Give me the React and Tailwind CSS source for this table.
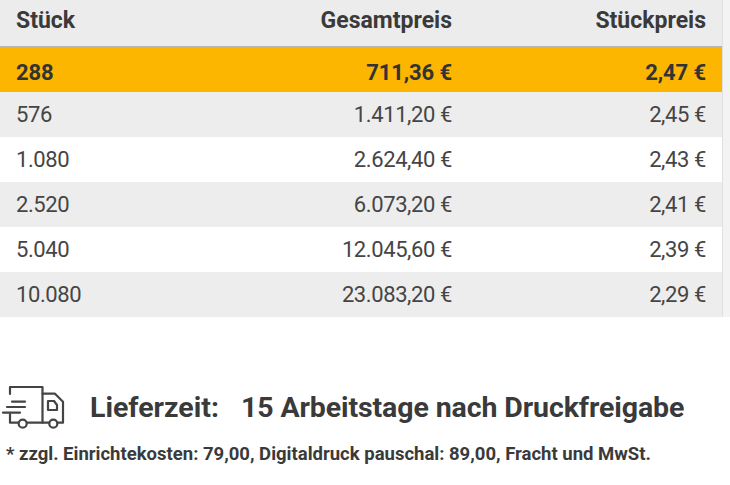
import React from "react";

const rows = [
  ["576", "1.411,20 €", "2,45 €"],
  ["1.080", "2.624,40 €", "2,43 €"],
  ["2.520", "6.073,20 €", "2,41 €"],
  ["5.040", "12.045,60 €", "2,39 €"],
  ["10.080", "23.083,20 €", "2,29 €"],
];

function Truck() {
  return (
    <svg width="70" height="52" viewBox="0 0 70 52" fill="none" stroke="#444" strokeWidth="2.2" strokeLinecap="round" strokeLinejoin="round">
      <path d="M10 13 V6 H42.5 V41.7" />
      <path d="M42.5 12.7 H55 L63 20.7 V41.7 H58" />
      <path d="M27 41.7 H49" />
      <path d="M10 33 V41.7 H18" />
      <path d="M48 20 H54 L57 24 V29 H48 Z" />
      <path d="M12 20.7 H25" />
      <path d="M7 26 H25" />
      <path d="M3 31.7 H20" />
      <circle cx="22.7" cy="42.7" r="4" />
      <circle cx="53.3" cy="42.7" r="4" />
    </svg>
  );
}

export default function App() {
  return (
    <div className="w-[730px] h-[485px] bg-white text-[#3d3d3d] font-['Roboto',sans-serif] overflow-hidden">
      <div className="flex">
        <div className="w-[722px]">
          <div className="grid grid-cols-[214px_254px_254px] h-[46px] bg-[#ececec] items-start pt-[4px] text-[23px] font-bold text-[#3a3a3a]">
            <div className="pl-4">Stück</div>
            <div className="pr-4 text-right">Gesamtpreis</div>
            <div className="pr-4 text-right">Stückpreis</div>
          </div>
          <div className="h-[2px] bg-[#b5b5b5]" />
          <div className="grid grid-cols-[214px_254px_254px] h-[44px] bg-[#fdb600] items-center pt-[4px] text-[22px] font-bold tracking-[-0.1px] text-[#333]">
            <div className="pl-4">288</div>
            <div className="pr-4 text-right">711,36 €</div>
            <div className="pr-4 text-right">2,47 €</div>
          </div>
          {rows.map((r, i) => (
            <div
              key={r[0]}
              className={`grid grid-cols-[214px_254px_254px] h-[45px] items-center text-[22px] tracking-[-0.4px] text-[#454545] ${i % 2 === 0 ? "bg-[#ededed]" : "bg-white"}`}
            >
              <div className="pl-4">{r[0]}</div>
              <div className="pr-4 text-right">{r[1]}</div>
              <div className="pr-4 text-right">{r[2]}</div>
            </div>
          ))}
        </div>
        <div className="w-[8px] bg-[#f3f3f3] border-l border-[#e0e0e0]" />
      </div>
      <div className="mt-[64px] flex items-center h-[52px]">
        <Truck />
        <div className="ml-[20px] pt-[2px] flex items-center text-[28.5px] leading-[28px] font-bold text-[#3a3a3a]">
          <span>Lieferzeit:</span>
          <span className="ml-[22px] tracking-[-0.1px]">15 Arbeitstage nach Druckfreigabe</span>
        </div>
      </div>
      <p className="mt-[11px] pl-[6px] text-[18.5px] leading-[20px] font-bold text-[#3a3a3a]">
        * zzgl. Einrichtekosten: 79,00, Digitaldruck pauschal: 89,00, Fracht und MwSt.
      </p>
    </div>
  );
}
